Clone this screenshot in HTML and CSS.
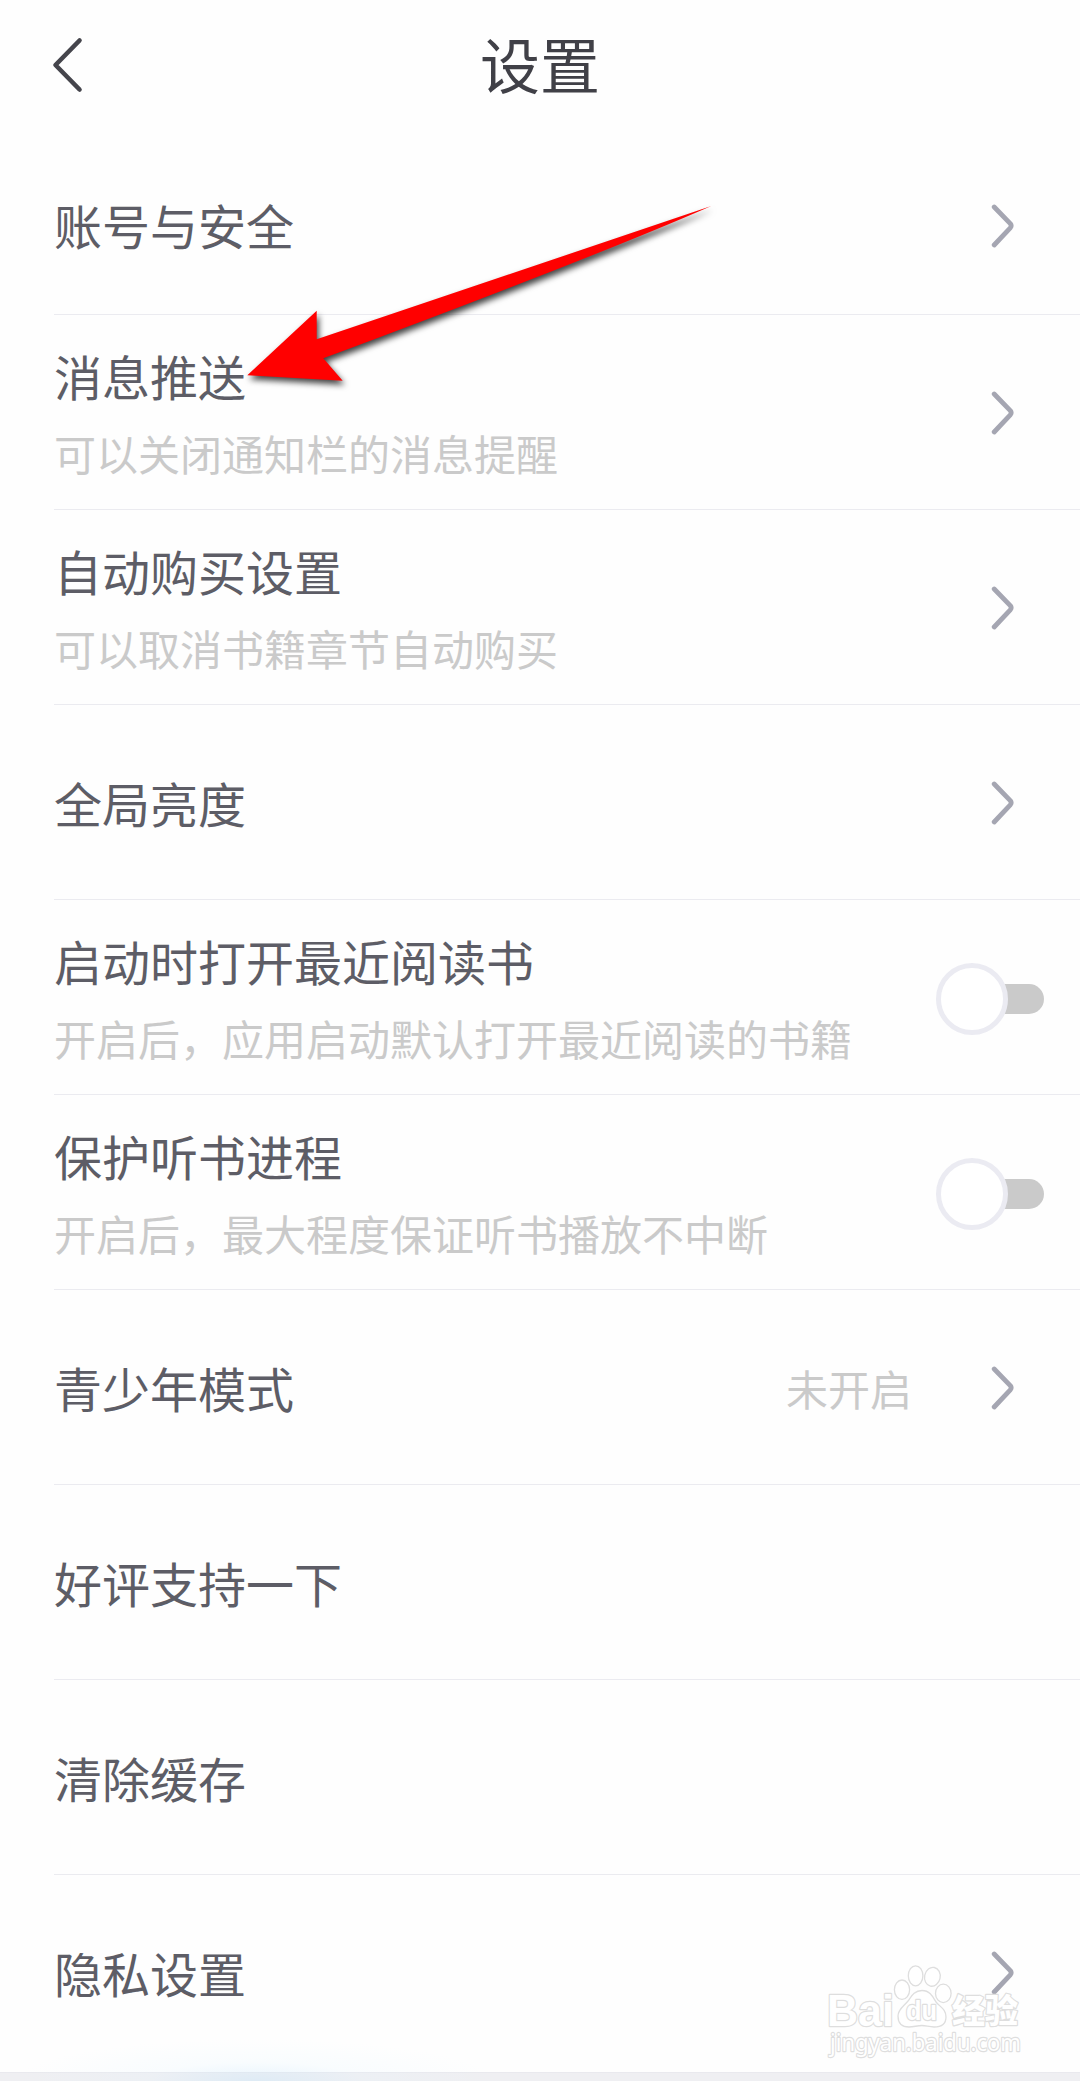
FILE: index.html
```html
<!DOCTYPE html>
<html lang="zh-CN">
<head>
<meta charset="utf-8">
<title>设置</title>
<link rel="stylesheet" href="styles.css">
</head>
<body>
<svg class="defs" aria-hidden="true">
  <symbol id="chevron" viewBox="0 0 24 46"><path d="M4.2 4 L20.3 20.6 Q22 22.6 20.3 24.8 L4.2 42"/></symbol>
</svg>
<main class="page">
  <header class="header">
    <svg class="back" viewBox="0 0 32 56"><path d="M28.5 3.5 L4.5 28 L28.5 52.5"/></svg>
    <h1 class="header-title">设置</h1>
  </header>
  <ul class="list">
    <li class="row row-first"><div class="label"><p class="title">账号与安全</p></div><svg class="chevron"><use href="#chevron"/></svg></li>
    <li class="row"><div class="label double"><p class="title">消息推送</p><p class="desc">可以关闭通知栏的消息提醒</p></div><svg class="chevron"><use href="#chevron"/></svg></li>
    <li class="row"><div class="label double"><p class="title">自动购买设置</p><p class="desc">可以取消书籍章节自动购买</p></div><svg class="chevron"><use href="#chevron"/></svg></li>
    <li class="row"><div class="label"><p class="title">全局亮度</p></div><svg class="chevron"><use href="#chevron"/></svg></li>
    <li class="row"><div class="label double"><p class="title">启动时打开最近阅读书</p><p class="desc">开启后，应用启动默认打开最近阅读的书籍</p></div><div class="switch"><span class="knob"></span><span class="track"></span></div></li>
    <li class="row"><div class="label double"><p class="title">保护听书进程</p><p class="desc">开启后，最大程度保证听书播放不中断</p></div><div class="switch"><span class="knob"></span><span class="track"></span></div></li>
    <li class="row"><div class="label"><p class="title">青少年模式</p></div><span class="value">未开启</span><svg class="chevron"><use href="#chevron"/></svg></li>
    <li class="row"><div class="label"><p class="title">好评支持一下</p></div></li>
    <li class="row"><div class="label"><p class="title">清除缓存</p></div></li>
    <li class="row row-last"><div class="label"><p class="title">隐私设置</p></div><svg class="chevron"><use href="#chevron"/></svg></li>
  </ul>
  <div class="section-gap"></div>
  <div class="glow"></div>
  <svg class="arrow" viewBox="230 190 500 210">
    <path d="M247.3 375.3 L316.7 310.7 L316.7 339.3 L711.3 206 Q595 257 323.3 358.3 L342.7 380.7 Z"/>
  </svg>
  <svg class="watermark" viewBox="820 1955 210 120">
    <text class="wm-bold" x="827" y="2025.5" font-size="44" textLength="67" lengthAdjust="spacingAndGlyphs">Bai</text>
    <g class="wm-paw">
      <ellipse cx="902" cy="1989.7" rx="7.6" ry="9.7"/>
      <ellipse cx="915.6" cy="1975.8" rx="7.3" ry="10"/>
      <ellipse cx="932.4" cy="1976.8" rx="7.8" ry="9.5" transform="rotate(12 932.4 1976.8)"/>
      <ellipse cx="943.3" cy="1993.4" rx="7.8" ry="9.2"/>
      <path d="M922 1990.5 C930 1990.5 933 1997 936 2002 C940 2007 946 2009 946 2017 C946 2024 941 2027 934 2027 C929 2027 926 2025.5 922 2025.5 C917 2025.5 914 2027 909 2027 C902 2027 898 2023 898 2016 C898 2009 904 2006 908 2001 C911 1997 914 1990.5 922 1990.5 Z"/>
    </g>
    <text class="wm-du" x="906" y="2020" font-size="27" textLength="31" lengthAdjust="spacingAndGlyphs">du</text>
    <text class="wm-cjk" x="952" y="2022.5" font-size="33" textLength="66" lengthAdjust="spacingAndGlyphs">经验</text>
    <text class="wm-url" x="830" y="2050.5" font-size="24" textLength="191" lengthAdjust="spacingAndGlyphs">jingyan.baidu.com</text>
  </svg>
</main>
</body>
</html>
```
FILE: styles.css
```css
* { box-sizing: border-box; margin: 0; padding: 0; }
body { background: #fefefe; font-family: "Noto Sans CJK SC", sans-serif; }
.defs { position: absolute; width: 0; height: 0; }
.page { position: relative; width: 1080px; height: 2081px; overflow: hidden; background: #fefefe; }

.header { display: grid; grid-template-columns: 120px 1fr 120px; align-items: center; height: 137px; padding-bottom: 7px; }
.back { width: 32px; height: 56px; margin-left: 51px; fill: none; stroke: #45454c; stroke-width: 4.6; stroke-linecap: round; stroke-linejoin: round; }
.header-title { padding-bottom: 4px; font-size: 60px; line-height: 80px; font-weight: 400; text-align: center; color: #404047; }

.list { list-style: none; padding-left: 54px; }
.row { display: flex; align-items: center; height: 195px; padding-top: 1px; border-bottom: 1px solid #ebebf0; }
.row-first { height: 178px; padding-top: 1px; }
.row-last { height: 197px; padding-bottom: 3px; border-bottom: 0; }
.label { flex: 1; padding-bottom: 1px; }
.row-first .label { padding-bottom: 4px; }
.label.double { padding-top: 6px; padding-bottom: 0; }
.title { font-size: 48px; line-height: 70px; color: #5d5d66; white-space: nowrap; }
.desc { margin-top: 4px; font-size: 42px; line-height: 78px; color: #cacaca; white-space: nowrap; }
.value { margin-right: 78px; font-size: 42px; line-height: 60px; color: #cacaca; }
.chevron { width: 24px; height: 46px; margin-right: 66px; fill: none; stroke: #a5a6b2; stroke-width: 4.8; stroke-linecap: round; stroke-linejoin: round; }

.switch { display: flex; align-items: center; margin-right: 36px; padding-top: 2px; }
.knob { width: 72px; height: 72px; border: 5px solid #ebebf2; border-radius: 50%; background: #fff; z-index: 1; }
.track { width: 46px; height: 30px; margin-left: -10px; border-radius: 0 15px 15px 0; background: #cacaca; }

.section-gap { height: 9px; background: #efeff2; border-top: 1px solid #e9e9ee; }
.glow { position: absolute; left: 0; bottom: 0; width: 520px; height: 44px; background: radial-gradient(ellipse 240px 42px at 255px 44px, rgba(195, 228, 250, .38), rgba(225, 244, 255, .18) 45%, rgba(240, 250, 255, 0)); }
.arrow { position: absolute; left: 230px; top: 190px; width: 500px; height: 210px; fill: #f00; filter: drop-shadow(2px 4px 3px rgba(0, 0, 0, .75)); }

.watermark { position: absolute; left: 820px; top: 1955px; width: 210px; height: 120px; fill: #fff; stroke: #dedede; stroke-width: 1.3; stroke-linejoin: round; }
.watermark text { paint-order: stroke; stroke-width: 2.4; }
.wm-bold, .wm-du { font-family: "Liberation Sans", sans-serif; font-weight: 700; }
.wm-cjk { font-family: "Noto Sans CJK SC", sans-serif; font-weight: 900; }
.wm-url { font-family: "Noto Sans", sans-serif; }
```
